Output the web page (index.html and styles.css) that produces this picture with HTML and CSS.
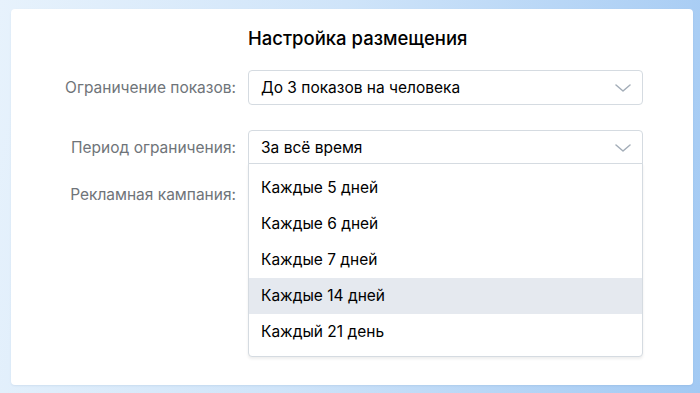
FILE: index.html
```html
<!DOCTYPE html>
<html lang="ru">
  <head>
    <meta charset="UTF-8" />
    <meta name="viewport" content="width=device-width, initial-scale=1.0" />
    <title>Настройка размещения</title>
    <link rel="stylesheet" href="styles.css">
  </head>
  <body>
    <div class="card">
      <h1 class="title">Настройка размещения</h1>

      <!-- Placement settings -->
      <div class="form">
        <div class="form-row row-limit">
          <label class="form-label">Ограничение показов:</label>
          <div class="select">
            <span class="select-value">До 3 показов на человека</span>
            <svg class="chevron" width="16" height="8" viewBox="0 0 16 8">
              <path d="M1 1l7 6 7-6" fill="none" stroke="#a3adb8" stroke-width="1.5" stroke-linecap="round" stroke-linejoin="round" />
            </svg>
          </div>
        </div>

        <div class="form-row row-period">
          <label class="form-label">Период ограничения:</label>
          <div class="select select-open">
            <span class="select-value">За всё время</span>
            <svg class="chevron" width="16" height="8" viewBox="0 0 16 8">
              <path d="M1 1l7 6 7-6" fill="none" stroke="#a3adb8" stroke-width="1.5" stroke-linecap="round" stroke-linejoin="round" />
            </svg>
            <ul class="dropdown">
              <li class="option">Каждые 5 дней</li>
              <li class="option">Каждые 6 дней</li>
              <li class="option">Каждые 7 дней</li>
              <li class="option option-hover">Каждые 14 дней</li>
              <li class="option">Каждый 21 день</li>
            </ul>
          </div>
        </div>

        <div class="form-row row-campaign">
          <label class="form-label">Рекламная кампания:</label>
          <div class="select">
            <span class="select-value"></span>
          </div>
        </div>
      </div>
    </div>
  </body>
</html>
```

FILE: styles.css
```css
body {
  margin: 0;
  padding: 9px 7px 8px 11px;
  height: 393px;
  box-sizing: border-box;
  font-family: Inter, "Noto Sans", Arial, sans-serif;
  background: linear-gradient(100deg, #e7f2fc 0%, #cfe4f9 45%, #a2c9f3 100%);
}
.card {
  height: 100%;
  box-sizing: border-box;
  background-color: #fff;
  border-radius: 4px;
  box-shadow: 0 1px 2px rgba(0, 60, 120, 0.08);
  padding: 18px 50px 0 40px;
}
.title {
  margin: 0 0 0 197px;
  font-size: 18.5px;
  line-height: 22px;
  font-weight: 500;
  color: #000;
}
.form {
  margin-top: 21px;
}
.form-row {
  display: flex;
  align-items: center;
  gap: 12px;
}
.row-period {
  margin-top: 25px;
}
.row-campaign {
  margin-top: 12px;
}
.form-label {
  width: 185px;
  flex-shrink: 0;
  text-align: right;
  font-size: 15.5px;
  color: #6f7479;
}
.select {
  position: relative;
  flex: 1;
  height: 35px;
  box-sizing: border-box;
  display: flex;
  align-items: center;
  padding: 0 11px 0 12px;
  border: 1px solid #d5dbe1;
  border-radius: 4px;
  background-color: #fff;
  font-size: 15.5px;
  color: #000;
}
.select-value {
  flex: 1;
}
.chevron {
  display: block;
}
.select-open {
  border-radius: 4px 4px 0 0;
}
.dropdown {
  position: absolute;
  top: 100%;
  left: -1px;
  right: -1px;
  margin: -1px 0 0;
  padding: 6px 0 6px;
  list-style: none;
  background-color: #fff;
  border: 1px solid #d5dbe1;
  border-radius: 0 0 4px 4px;
  box-shadow: 0 2px 3px rgba(0, 0, 0, 0.07);
  z-index: 2;
}
.option {
  height: 36px;
  line-height: 36px;
  padding-left: 12px;
  font-size: 15.5px;
  color: #000;
}
.option-hover {
  background-color: #e5e9ef;
}
```
